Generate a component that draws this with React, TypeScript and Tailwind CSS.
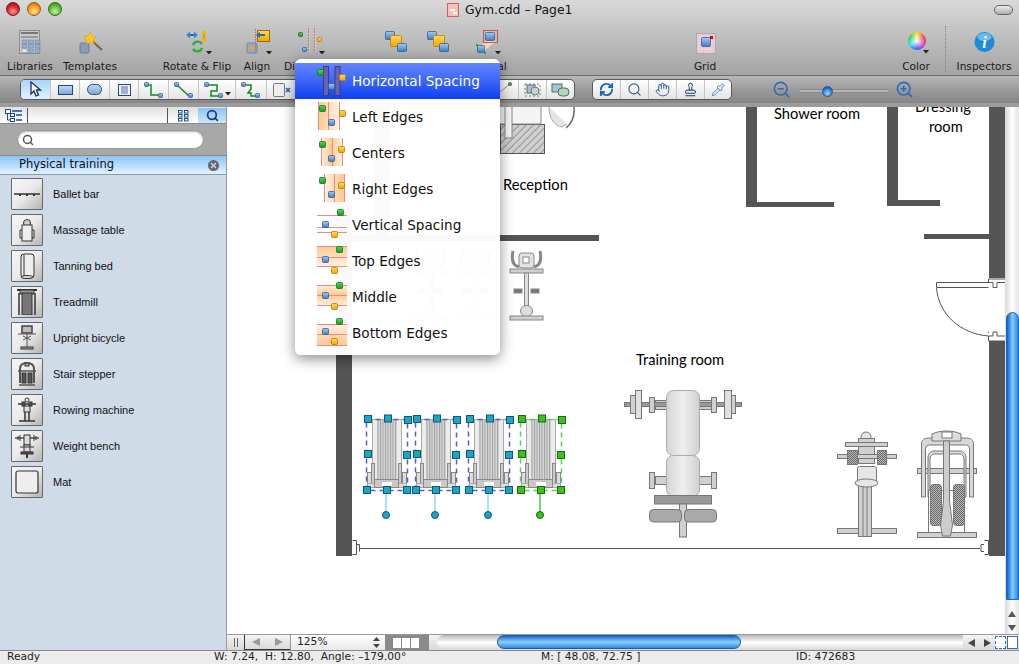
import { Hand, Pipette, RefreshCw, Search, Stamp, ZoomIn, ZoomOut } from "lucide-react";

const UI = "font-['DejaVu_Sans',sans-serif]";

function Sq({ x, y, w, h, c = "blue" }: { x: number; y: number; w: number; h: number; c?: string }) {
  const stroke = c === "blue" ? "#2c5f9e" : c === "green" ? "#0c7a1c" : "#b87a00";
  return <rect x={x + 0.5} y={y + 0.5} width={w - 1} height={h - 1} rx={1} fill={`url(#g-${c})`} stroke={stroke} strokeWidth={0.8} />;
}

function Defs() {
  return (
    <svg className="absolute w-0 h-0">
      <defs>
        <linearGradient id="g-blue" x1="0" y1="0" x2="0" y2="1"><stop offset="0" stopColor="#a9c8ee" /><stop offset="1" stopColor="#3f7cc4" /></linearGradient>
        <linearGradient id="g-orange" x1="0" y1="0" x2="0" y2="1"><stop offset="0" stopColor="#ffdc55" /><stop offset="1" stopColor="#f2a400" /></linearGradient>
        <linearGradient id="g-green" x1="0" y1="0" x2="0" y2="1"><stop offset="0" stopColor="#62d458" /><stop offset="1" stopColor="#0e9a22" /></linearGradient>
        <linearGradient id="g-pad" x1="0" y1="0" x2="1" y2="0"><stop offset="0" stopColor="#d4d4d4" /><stop offset=".5" stopColor="#efefef" /><stop offset="1" stopColor="#d0d0d0" /></linearGradient>
        <linearGradient id="g-peachl" x1="0" y1="0" x2="1" y2="0"><stop offset="0" stopColor="#ffc890" /><stop offset="1" stopColor="#fff0e0" /></linearGradient>
        <linearGradient id="g-peachr" x1="0" y1="0" x2="1" y2="0"><stop offset="0" stopColor="#fff0e0" /><stop offset="1" stopColor="#ffc890" /></linearGradient>
        <linearGradient id="g-peachc" x1="0" y1="0" x2="1" y2="0"><stop offset="0" stopColor="#fff0e0" /><stop offset=".5" stopColor="#ffc890" /><stop offset="1" stopColor="#fff0e0" /></linearGradient>
        <linearGradient id="g-peacht" x1="0" y1="0" x2="0" y2="1"><stop offset="0" stopColor="#ffc890" /><stop offset="1" stopColor="#fff0e0" /></linearGradient>
        <linearGradient id="g-peachm" x1="0" y1="0" x2="0" y2="1"><stop offset="0" stopColor="#fff0e0" /><stop offset=".5" stopColor="#ffc890" /><stop offset="1" stopColor="#fff0e0" /></linearGradient>
        <linearGradient id="g-peachb" x1="0" y1="0" x2="0" y2="1"><stop offset="0" stopColor="#fff0e0" /><stop offset="1" stopColor="#ffc890" /></linearGradient>
        <pattern id="hatch" width="5" height="5" patternUnits="userSpaceOnUse" patternTransform="rotate(45)"><rect width="5" height="5" fill="#cfcfcf" /><line x1="0" y1="0" x2="0" y2="5" stroke="#555" strokeWidth="1" /></pattern>
        <pattern id="check" width="2" height="2" patternUnits="userSpaceOnUse"><rect width="2" height="2" fill="#bbb" /><rect width="1" height="1" fill="#666" /><rect x="1" y="1" width="1" height="1" fill="#666" /></pattern>
        <pattern id="ribs" width="2.5" height="4" patternUnits="userSpaceOnUse"><rect width="2.5" height="4" fill="#d6d6d6" /><rect width="1" height="4" fill="#a2a2a2" /></pattern>
      </defs>
    </svg>
  );
}

function Caret() {
  return <path d="M0 0h6l-3 3.5z" fill="#222" />;
}

// top toolbar icons, all 40x28
function IconLibraries() {
  const cells = [];
  for (let r = 0; r < 3; r++) for (let c = 0; c < 3; c++) cells.push(<rect key={`${r}${c}`} x={12 + c * 6.5} y={14 + r * 4.5} width={5} height={3.5} fill={r === 2 && c === 0 ? "#eee" : "#8fb2d8"} stroke="#667" strokeWidth={0.4} />);
  return (
    <svg width="40" height="28">
      <rect x="9.500" y="4.500" width="20" height="23" fill="#c9c9c9" stroke="#8c8c8c" />
      <rect x="11" y="6" width="17" height="2" fill="#777" />
      <rect x="11" y="10" width="17" height="2" fill="#999" />
      {cells}
    </svg>
  );
}
function IconTemplates() {
  return (
    <svg width="40" height="28">
      <rect x="10" y="17" width="9" height="10" rx="1.500" fill="#8c9bb8" stroke="#6c7a95" />
      <path d="M20 13l12 11" stroke="#8a5a30" strokeWidth="2" />
      <path d="M20 6l2 4 4 1-3 3 1 4-4-2-4 2 1-4-3-3 4-1z" fill="#ffc820" stroke="#e89000" strokeWidth=".5" />
      <circle cx="15" cy="5" r="1" fill="#7fd0ff" /><circle cx="28" cy="7" r="1" fill="#7fd0ff" /><circle cx="29" cy="15" r="1" fill="#7fd0ff" />
    </svg>
  );
}
function IconRotate() {
  return (
    <svg width="40" height="28">
      <path d="M11 9h8" stroke="#2468b0" strokeWidth="2" />
      <path d="M9 9l4-3.500v7zM21 9l-4-3.500v7z" fill="#3a86d0" />
      <path d="M27 7v8" stroke="#e2a400" strokeWidth="2.500" />
      <path d="M27 4l-3 4h6zM27 17l-3-4h6z" fill="#f4b800" />
      <path d="M16 19a5 5 0 0 1 9-1M25 22a5 5 0 0 1-9 1" fill="none" stroke="#2fae3a" strokeWidth="2.400" />
      <g transform="translate(29 25)"><Caret /></g>
    </svg>
  );
}
function IconAlign() {
  return (
    <svg width="40" height="28">
      <rect x="10" y="17" width="10" height="10" rx="1.500" fill="#8faad2" stroke="#6b82a8" />
      <rect x="20.500" y="4.500" width="12" height="11" fill="url(#g-orange)" stroke="#a06800" />
      <path d="M18.500 3v24" stroke="#d06060" strokeDasharray="1.500 1" />
      <path d="M19 9l4-3v2h5v2h-5v2z" fill="#2a6ab0" />
      <path d="M18 22l-4-2.500v1.500h-3v2h3v1.500z" fill="#f4a800" />
      <g transform="translate(29 25)"><Caret /></g>
    </svg>
  );
}
function IconDistribute() {
  return (
    <svg width="40" height="28">
      <path d="M18.500 2v24M24.500 2v24" stroke="#c77" strokeDasharray="2 1" />
      <path d="M19.500 2v24M25.500 2v24" stroke="#ccb" />
      <Sq x={8} y={6} w={5} h={5} c="green" />
      <Sq x={12} y={21} w={5} h={5} />
      <Sq x={27} y={11} w={5} h={5} c="orange" />
      <g transform="translate(29 25)"><Caret /></g>
    </svg>
  );
}
function IconOrder({ d }: { d: number }) {
  return (
    <svg width="40" height="28">
      <Sq x={8 + d} y={5} w={10} h={9} />
      <Sq x={13 + d + d / 2} y={9} w={12} h={12} c="orange" />
      <Sq x={20 + d} y={17} w={10} h={9} />
    </svg>
  );
}
function IconIdentical() {
  return (
    <svg width="40" height="28">
      <path d="M13 24L26 10l6 5-14 12z" fill="#f6d6b8" />
      <rect x="19.500" y="4.500" width="14" height="12" fill="none" stroke="#d05050" />
      <Sq x={21} y={6} w={10} h={9} />
      <Sq x={13} y={19} w={8} h={8} />
      <rect x="12" y="18" width="2" height="2" fill="#2a2" /><rect x="20" y="26" width="2" height="2" fill="#2a2" />
      <g transform="translate(31 25)"><Caret /></g>
    </svg>
  );
}
function IconGrid() {
  return (
    <svg width="40" height="28">
      <rect x="11.500" y="7.500" width="19" height="20" fill="#e7c6d0" stroke="#aaa" />
      <path d="M14 8v19M17 8v19M20 8v19M23 8v19M26 8v19M12 11h18M12 14h18M12 17h18M12 20h18M12 23h18" stroke="#f4e2e8" strokeWidth=".6" />
      <Sq x={16} y={11} w={10} h={10} />
      <rect x="25" y="10" width="3" height="3" fill="#d00" />
    </svg>
  );
}
function IconColor() {
  return (
    <div className="relative w-[40px] h-[28px] flex justify-center pt-[6px] pl-[1px]">
      <div className="w-[18px] h-[18px] rounded-full bg-[radial-gradient(circle,#ffffff_0%,#ffffff00_72%),conic-gradient(#f4e020,#f02828,#d020c0,#2848f0,#20d0f0,#20d028,#f4e020)]" />
      <svg width="6" height="4" className="absolute left-[27px] top-[24px]"><Caret /></svg>
    </div>
  );
}
function IconInfo() {
  return (
    <svg width="42" height="28">
      <circle cx="21.500" cy="16" r="10" fill="#1e8ad8" />
      <ellipse cx="21.500" cy="11" rx="7" ry="4" fill="#8cd0f6" opacity=".7" />
      <text x="21.500" y="22" textAnchor="middle" fontFamily="'Liberation Serif',serif" fontStyle="italic" fontWeight="700" fontSize="16" fill="#fff">i</text>
    </svg>
  );
}

function TopItem({ w, ml = 0, label, children }: { w: number; ml?: number; label: string; children: React.ReactNode }) {
  return (
    <div className="flex flex-col items-center shrink-0" style={{ width: w, marginLeft: ml }}>
      <div className="h-[28px]">{children}</div>
      <span className="mt-[5px] text-[10.600px] leading-[14px] text-[#1a1a1a] whitespace-nowrap">{label}</span>
    </div>
  );
}

function Toolbar() {
  return (
    <div className={`h-[76px] shrink-0 border-b border-[#6e6e6e] bg-gradient-to-b from-[#d9d9d9] to-[#a4a4a4] ${UI}`}>
      <div className="h-[26px] flex items-start relative">
        <div className="flex gap-[7px] pl-[6px] pt-[2px]">
          <span className="w-[14px] h-[14px] rounded-full border border-[#7a1a1a] bg-[radial-gradient(circle_at_50%_70%,#ff9a8a,#d8202c_55%,#8a0a14)]" />
          <span className="w-[14px] h-[14px] rounded-full border border-[#9a5a10] bg-[radial-gradient(circle_at_50%_70%,#ffe08a,#f59a20_55%,#b85c00)]" />
          <span className="w-[14px] h-[14px] rounded-full border border-[#2a701a] bg-[radial-gradient(circle_at_50%_70%,#c4f0a0,#62b838_55%,#2a7a14)]" />
        </div>
        <div className="flex items-center ml-[385px] mt-[2px]">
          <svg width="13" height="14"><rect x=".5" y=".5" width="11" height="13" fill="#f4c0b8" stroke="#d06060" /><rect x="3" y="6" width="5" height="2" fill="#fff" /><rect x="6" y="9" width="4" height="2" fill="#fff" /></svg>
          <span className="ml-[5px] text-[12.400px] leading-[16px] text-[#111] whitespace-nowrap">Gym.cdd – Page1</span>
        </div>
        <span className="ml-auto mr-[6px] mt-[5px] w-[19px] h-[10px] rounded-full border border-[#666] bg-gradient-to-b from-[#eee] to-[#aaa]" />
      </div>
      <div className="flex">
        <TopItem w={60} label="Libraries"><IconLibraries /></TopItem>
        <TopItem w={60} label="Templates"><IconTemplates /></TopItem>
        <TopItem w={70} ml={42} label="Rotate & Flip"><IconRotate /></TopItem>
        <TopItem w={50} label="Align"><IconAlign /></TopItem>
        <TopItem w={56} label="Distribute"><IconDistribute /></TopItem>
        <TopItem w={40} ml={39} label=""><IconOrder d={0} /></TopItem>
        <TopItem w={40} label=""><IconOrder d={2} /></TopItem>
        <TopItem w={54} label="Identical"><IconIdentical /></TopItem>
        <TopItem w={50} ml={169} label="Grid"><IconGrid /></TopItem>
        <TopItem w={50} ml={161} label="Color"><IconColor /></TopItem>
        <div className="ml-[4px] w-0 h-[46px] border-l border-dotted border-[#808080]" />
        <TopItem w={60} ml={8} label="Inspectors"><IconInfo /></TopItem>
      </div>
    </div>
  );
}

function Cell({ w, on, children, last }: { w: number; on?: boolean; last?: boolean; children?: React.ReactNode }) {
  return (
    <div style={{ width: w }} className={`h-full shrink-0 flex items-center justify-center ${last ? "" : "border-r border-[#c4c4c4]"} ${on ? "bg-gradient-to-b from-[#a8d4fa] to-[#e0f2ff]" : ""}`}>
      {children}
    </div>
  );
}

function Conn({ kind }: { kind: number }) {
  const d = kind === 0 ? "M4 4h4v10h9" : kind === 1 ? "M4 4l12 11" : kind === 2 ? "M4 4h10v6H8v5h9" : "M6 4h5v4l-3 4h3v3h7";
  return (
    <svg width="22" height="18">
      <path d={d} fill="none" stroke="#0f8a22" strokeWidth="1.500" />
      <Sq x={1} y={1} w={5} h={5} />
      <Sq x={15} y={12} w={5} h={5} />
    </svg>
  );
}

function Toolbar2() {
  return (
    <div className="h-[31px] shrink-0 pt-[3px] bg-gradient-to-b from-[#b8b8b8] via-[#9a9a9a] to-[#868686] flex border-b-[4px] border-[#9c9c9c]">
      <div className="ml-[20px] w-[555px] h-[21px] rounded-[5px] border border-[#5a5a5a] bg-gradient-to-b from-white to-[#e4e4e4] flex overflow-hidden">
        <Cell w={30} on>
          <svg width="14" height="17"><path d="M2 1v12l3-3 2 5 2.500-1-2-5h4z" fill="#fff" stroke="#1a2a66" strokeWidth="1.300" /></svg>
        </Cell>
        <Cell w={29}><span className="w-[15px] h-[10px] border border-[#1a4a90] bg-gradient-to-b from-[#c4d8f0] to-[#7fa8d8]" /></Cell>
        <Cell w={30}><span className="w-[15px] h-[11px] rounded-full border border-[#1a4a90] bg-gradient-to-b from-[#c4d8f0] to-[#7fa8d8]" /></Cell>
        <Cell w={29}>
          <svg width="13" height="12"><rect x=".5" y=".5" width="12" height="11" fill="#f4f4fa" stroke="#1a4a90" /><path d="M3 3h7M3 5h7M3 7h7M3 9h7" stroke="#55689a" /></svg>
        </Cell>
        <Cell w={30}><Conn kind={0} /></Cell>
        <Cell w={30}><Conn kind={1} /></Cell>
        <Cell w={37}>
          <Conn kind={2} />
          <svg width="7" height="5" className="self-end mb-[2px]"><Caret /></svg>
        </Cell>
        <Cell w={31}><Conn kind={3} /></Cell>
        <Cell w={30}>
          <svg width="22" height="16"><rect x="2.500" y="1.500" width="11" height="13" rx="1" fill="#eee" stroke="#777" /><path d="M15 6l4 4m0-4l-4 4" stroke="#1a60c0" strokeWidth="1.500" /></svg>
        </Cell>
        <div className="flex-1 border-r border-[#c4c4c4] flex items-center justify-end pr-[4px]">
          <svg width="20" height="17"><path d="M2 14L16 3" stroke="#c77" /><Sq x={1} y={12} w={4} h={4} c="green" /><Sq x={14} y={1} w={4} h={4} c="green" /></svg>
        </div>
        <Cell w={28}>
          <svg width="22" height="17"><rect x="3" y="3" width="15" height="12" fill="none" stroke="#4a4" strokeDasharray="2 2" /><rect x="5" y="4" width="8" height="8" fill="#a8bcd4" stroke="#666" /><circle cx="13" cy="10" r="4" fill="#c4d0dc" stroke="#777" /></svg>
        </Cell>
        <Cell w={27} last>
          <svg width="22" height="17"><rect x="2" y="3" width="10" height="8" fill="#a8c0d8" stroke="#4a7a4a" /><rect x="8" y="7" width="11" height="8" rx="4" fill="#b4d4c0" stroke="#4a7a4a" /></svg>
        </Cell>
      </div>
      <div className="ml-[17px] w-[140px] h-[21px] rounded-[5px] border border-[#5a5a5a] bg-gradient-to-b from-white to-[#e4e4e4] flex overflow-hidden">
        <Cell w={28}><RefreshCw size={15} strokeWidth={3} className="text-[#1a66b8]" /></Cell>
        <Cell w={28}><Search size={15} strokeWidth={1.8} className="text-[#3a5a88]" /></Cell>
        <Cell w={28}><Hand size={15} strokeWidth={1.400} className="text-[#1a4a90]" /></Cell>
        <Cell w={28}><Stamp size={15} strokeWidth={1.600} className="text-[#1a3a70]" /></Cell>
        <Cell w={26} last><Pipette size={14} strokeWidth={1.500} className="text-[#4a78b8]" /></Cell>
      </div>
      <div className="ml-[40px] mt-[1px] flex items-start">
        <ZoomOut size={19} strokeWidth={2} className="text-[#2a6ab8]" />
        <div className="relative ml-[7px] mt-[9px] w-[92px] h-[4px] rounded-full bg-[#b4b4b4] border border-[#8a8a8a]">
          <span className="absolute left-[23px] -top-[4px] w-[11px] h-[11px] rounded-full bg-[radial-gradient(circle_at_50%_70%,#a8d8ff,#1a66c0_70%)] border border-[#2a5a9a]" />
        </div>
        <ZoomIn size={19} strokeWidth={2} className="text-[#2a6ab8] ml-[5px]" />
      </div>
    </div>
  );
}

function Gl({ children }: { children: React.ReactNode }) {
  return <svg width="26" height="26" viewBox="0 0 26 26" fill="none" stroke="#333" strokeWidth="1">{children}</svg>;
}

const shapes: { name: string; icon: React.ReactNode }[] = [
  { name: "Ballet bar", icon: <Gl><path d="M0 13h26" strokeWidth="1.500" /><path d="M6 13v2M13 13v2M20 13v2" strokeWidth="2" /></Gl> },
  { name: "Massage table", icon: <Gl><circle cx="13" cy="6" r="3.500" fill="#ccc" /><rect x="8" y="8" width="10" height="16" fill="#eee" /><path d="M8 13H6v8h2M18 13h2v8h-2" /></Gl> },
  { name: "Tanning bed", icon: <Gl><rect x="7" y="1" width="13" height="24" rx="3" fill="#eee" /><path d="M10 2v22" /><ellipse cx="13" cy="24" rx="6" ry="1.500" fill="#ddd" /></Gl> },
  { name: "Treadmill", icon: <Gl><path d="M3 1h20" strokeWidth="2" /><rect x="6" y="1" width="14" height="4" fill="#999" /><rect x="8" y="4" width="10" height="22" fill="#777" /><path d="M5 4v22M21 4v22" strokeWidth="1.500" /></Gl> },
  { name: "Upright bicycle", icon: <Gl><rect x="8" y="1" width="10" height="7" fill="#bbb" stroke="#444" strokeWidth="1.500" /><path d="M4 9h18M13 9v13M9 15l8-4M9 11l8 4" stroke="#555" /><rect x="7" y="22" width="12" height="2" fill="#aaa" /></Gl> },
  { name: "Stair stepper", icon: <Gl><path d="M6 22V8c0-4 3-6 7-6s7 2 7 6v14" strokeWidth="2" stroke="#555" /><rect x="11" y="2" width="4" height="3" fill="#aaa" /><rect x="8" y="12" width="4" height="10" fill="#555" /><rect x="14" y="12" width="4" height="10" fill="#555" /><path d="M4 10h18M5 24h16" stroke="#555" strokeWidth="1.500" /></Gl> },
  { name: "Rowing machine", icon: <Gl><circle cx="13" cy="3" r="2" /><path d="M4 7h18" strokeWidth="1.500" /><rect x="8" y="5" width="3" height="4" fill="#555" /><rect x="15" y="5" width="3" height="4" fill="#555" /><rect x="10" y="9" width="6" height="6" fill="#ddd" /><path d="M11 15v9M15 15v9M5 24h16" strokeWidth="1.500" /></Gl> },
  { name: "Weight bench", icon: <Gl><path d="M1 5h24" stroke="#555" strokeWidth="1.500" /><path d="M4 3v4M6 2v6M20 2v6M22 3v4" /><rect x="10" y="2" width="6" height="10" fill="#ddd" /><rect x="10" y="12" width="6" height="7" fill="#ddd" /><path d="M6 14h14" /><rect x="7" y="19" width="12" height="2" fill="#555" /><path d="M13 21v4" strokeWidth="2" /></Gl> },
  { name: "Mat", icon: <Gl><rect x="2" y="2" width="22" height="22" rx="2" fill="#eee" strokeWidth="1.200" /></Gl> },
];

function Sidebar() {
  return (
    <div className="w-[227px] shrink-0 flex flex-col bg-[#cfdbe7] border-r border-[#9a9a9a]">
      <div className="h-[17px] pt-px shrink-0 flex bg-gradient-to-b from-[#e0e0e0] to-white border-b border-[#8a8a8a]">
        <div className="w-[28px] flex items-center justify-center border-r border-[#555]">
          <svg width="17" height="13"><rect x=".5" y=".5" width="5" height="4" fill="#fff" stroke="#1a4a90" /><rect x="5.500" y="4.500" width="4" height="3" fill="#fff" stroke="#1a4a90" /><rect x="5.500" y="9.500" width="4" height="3" fill="#fff" stroke="#1a4a90" /><path d="M7 2h10M11 6h6M11 11h6" stroke="#1a4a90" strokeWidth="1.500" /><path d="M2.500 5v6h3" fill="none" stroke="#1a4a90" /></svg>
        </div>
        <div className="w-[141px] border-r border-[#555]" />
        <div className="w-[30px] flex items-center justify-center">
          <svg width="11" height="12" fill="#fff" stroke="#1a4a90"><rect x=".5" y=".5" width="3.500" height="2.500" /><rect x="6.500" y=".5" width="3.500" height="2.500" /><rect x=".5" y="4.500" width="3.500" height="2.500" /><rect x="6.500" y="4.500" width="3.500" height="2.500" /><rect x=".5" y="8.500" width="3.500" height="2.500" /><rect x="6.500" y="8.500" width="3.500" height="2.500" /></svg>
        </div>
        <div className="w-[28px] flex items-center justify-center bg-gradient-to-b from-[#8fc4f4] to-[#cce4fa]">
          <Search size={13} strokeWidth={3.200} className="text-[#1a3f88]" />
        </div>
      </div>
      <div className="h-[32px] shrink-0 pl-[17px] pt-[6px] bg-[#a8a8a8] border-b border-[#8a8a8a]">
        <div className="w-[187px] h-[19px] rounded-full bg-white border border-[#999] shadow-[inset_0_1px_2px_rgba(0,0,0,.3)] flex items-center pl-[4px]">
          <Search size={12} strokeWidth={3} className="text-[#555]" />
        </div>
      </div>
      <div className={`h-[19px] shrink-0 pl-[19px] flex items-center bg-gradient-to-b from-[#8cc4f8] to-[#e0f2ff] border-b border-[#8a9aa8] ${UI}`}>
        <span className="text-[11.500px] leading-[14px] -mt-[2px] text-[#111]">Physical training</span>
        <span className="ml-auto mr-[7px] w-[11px] h-[11px] rounded-full bg-[#666] text-[#ddd] flex items-center justify-center">
          <svg width="7" height="7"><path d="M1 1l5 5m0-5l-5 5" stroke="currentColor" strokeWidth="1.200" /></svg>
        </span>
      </div>
      <div className="flex flex-col gap-[4px] pt-[3px] pl-[11px] font-['Liberation_Sans',sans-serif]">
        {shapes.map(s => (
          <div key={s.name} className="flex items-center h-[32px]">
            <div className="w-[32px] h-[32px] shrink-0 rounded-[1px] border-[1.500px] border-[#686868] bg-gradient-to-br from-[#f6f6f6] via-[#eaeaea] to-[#b4b4b4] flex items-center justify-center">
              {s.icon}
            </div>
            <span className="ml-[10px] text-[11px] text-[#111]">{s.name}</span>
          </div>
        ))}
      </div>
    </div>
  );
}

function Bike({ x }: { x: number }) {
  return (
    <g transform={`translate(${x} 250)`} stroke="#888" fill="#d0d0d0">
      <path d="M3 1c-2 10 1 15 6 16M30 1c2 10-1 15-6 16" fill="none" stroke="#888" strokeWidth="3" />
      <rect x="9" y="3" width="15" height="15" rx="3" fill="#e2e2e2" />
      <rect x="13" y="7" width="6" height="6" fill="#fff" />
      <rect x="0" y="19" width="33" height="4" />
      <rect x="14.500" y="23" width="4" height="37" fill="#ddd" />
      <rect x="4" y="39" width="8" height="4" fill="#777" />
      <rect x="21" y="39" width="8" height="4" fill="#777" />
      <ellipse cx="16.500" cy="61" rx="6" ry="5.500" fill="#ddd" />
      <rect x="0" y="66" width="33" height="4" />
    </g>
  );
}

function Treadmill({ dx, green }: { dx: number; green?: boolean }) {
  const f = green ? "#3cc01e" : "#20a4c4";
  const s = green ? "#1a6a10" : "#0c5878";
  const hs: [number, number][] = [[368, 419], [388, 418.500], [408, 420], [368, 454], [407, 455], [367, 490], [387, 490], [407, 490]];
  return (
    <g transform={`translate(${dx} 0)`}>
      <rect x="372.500" y="419.500" width="29" height="61" fill="#ececec" stroke="#aaa" />
      <rect x="377" y="420" width="20" height="60" fill="url(#ribs)" />
      <rect x="367.500" y="472.500" width="4" height="14" fill="#ddd" stroke="#888" />
      <rect x="402.500" y="472.500" width="4" height="14" fill="#ddd" stroke="#888" />
      <rect x="371.500" y="463.500" width="3" height="20" fill="#ccc" stroke="#888" />
      <rect x="398.500" y="463.500" width="3" height="20" fill="#ccc" stroke="#888" />
      <rect x="367.500" y="483.500" width="39" height="4" fill="#ddd" stroke="#aaa" />
      <rect x="374.500" y="479.500" width="24" height="8" fill="#c8c8c8" stroke="#888" />
      <rect x="382" y="482" width="10" height="4" fill="#fff" />
      <rect x="366.500" y="419.500" width="41" height="71" fill="none" stroke={green ? "#52d452" : "#5a5ad0"} strokeWidth="1.500" strokeDasharray="5 4" />
      <path d="M386 491v24" stroke={green ? "#46c846" : "#9ad0f8"} strokeWidth="1.500" />
      {hs.map(([x, y], i) => <rect key={i} x={x - 3.500} y={y - 3.500} width="7" height="7" fill={f} stroke={s} />)}
      <circle cx="386" cy="515" r="3.500" fill={f} stroke={s} />
    </g>
  );
}

function Plan() {
  const wall = "#555";
  return (
    <svg className="absolute left-0 top-0" width="778" height="527" viewBox="227 107 778 527">
      {/* walls */}
      <g fill={wall}>
        <rect x="336" y="200" width="16" height="356" />
        <rect x="375" y="107" width="15" height="133" fill="#666" />
        <rect x="352" y="235" width="247" height="6" />
        <rect x="746" y="107" width="11" height="100" />
        <rect x="746" y="202" width="88" height="5" />
        <rect x="887" y="107" width="11" height="99" />
        <rect x="887" y="200" width="53" height="6" />
        <rect x="924" y="234" width="65" height="5" />
        <rect x="989" y="107" width="16" height="171" />
        <rect x="989" y="341" width="16" height="215" />
      </g>
      {/* door */}
      <g fill="#fff" stroke="#555">
        <path d="M988.500 279v3.500M988.500 333v-1M1005 279h-16.500" fill="none" />
        <path d="M936.500 282.500h56.500v5h4v-5h8M936.500 282.500v5h52" fill="none" />
        <path d="M936.500 288c2 26 24 46 52 48h4.500v-4h4v4h8M988.500 336v5h16.500" fill="none" />
      </g>
      {/* reception */}
      <rect x="500.500" y="124.500" width="44" height="29" fill="url(#hatch)" stroke="#555" />
      <rect x="480" y="100" width="61" height="24" fill="#f4f4f4" stroke="#888" />
      <rect x="505" y="100" width="7" height="38" fill="#f4f4f4" stroke="#888" />
      <path d="M549 107c0 12 6 19 13 20l5-3" fill="#e4e4e4" stroke="#aaa" />
      <path d="M574 107c1 10-2 16-8 21" fill="none" stroke="#666" strokeWidth="1.500" />
      <Bike x={510} />
      <Bike x={414} />
      <Bike x={459} />
      {/* bottom dimension line */}
      <path d="M352.500 540.500h4v14h-4M356.500 544.500h3v7M360 548.500h620M984.500 540.500h4v14h-4M984 544.500h-3v7h3" fill="#fff" stroke="#555" />
      {[0, 49, 102].map(d => <Treadmill key={d} dx={d} />)}
      <Treadmill dx={154} green />
      {/* weight bench */}
      <g stroke="#777" fill="#d0d0d0">
        <rect x="655.500" y="400.500" width="56" height="9" />
        <rect x="624.500" y="402.500" width="117" height="4" fill="#999" />
        <rect x="630.500" y="395.500" width="5" height="18" /><rect x="635.500" y="390.500" width="6" height="28" fill="#e0e0e0" />
        <rect x="731.500" y="395.500" width="4" height="18" /><rect x="724.500" y="390.500" width="7" height="28" fill="#e0e0e0" />
        <rect x="649.500" y="397.500" width="5" height="15" /><rect x="711.500" y="397.500" width="5" height="15" />
        <rect x="655.500" y="476.500" width="56" height="8" /><rect x="649.500" y="472.500" width="5" height="16" /><rect x="711.500" y="472.500" width="5" height="16" />
        <rect x="666.500" y="390.500" width="33" height="65" rx="7" fill="url(#g-pad)" stroke="#aaa" />
        <rect x="666.500" y="455.500" width="33" height="41" rx="7" fill="url(#g-pad)" stroke="#aaa" />
        <rect x="654.500" y="495.500" width="57" height="8.500" fill="#999" />
        <rect x="679.500" y="504" width="7" height="33" />
        <rect x="649.500" y="509.500" width="32" height="12.500" rx="4" fill="#aaa" />
        <rect x="684.500" y="509.500" width="32" height="12.500" rx="4" fill="#aaa" />
      </g>
      {/* rowing machine */}
      <g stroke="#777" fill="#d0d0d0">
        <circle cx="866" cy="437" r="5" fill="#e4e4e4" />
        <rect x="837.500" y="528.500" width="59" height="5" />
        <rect x="858.500" y="480.500" width="13" height="56" /><path d="M863 481v56M867 481v56" />
        <rect x="858.500" y="438.500" width="16" height="5" />
        <rect x="845.500" y="442.500" width="42" height="4" />
        <rect x="858.500" y="446.500" width="16" height="17" />
        <rect x="837.500" y="454.500" width="59" height="4" />
        <rect x="847.500" y="450.500" width="10" height="14" fill="url(#check)" />
        <rect x="877.500" y="450.500" width="9" height="14" fill="url(#check)" />
        <rect x="857.500" y="466.500" width="19" height="16" rx="2" fill="#e6e6e6" />
        <ellipse cx="866.500" cy="483" rx="11.500" ry="4" fill="#e6e6e6" />
      </g>
      {/* stair stepper */}
      <g stroke="#777" fill="#d0d0d0">
        <rect x="917.500" y="532.500" width="59" height="5" />
        <rect x="917.500" y="468.500" width="59" height="5" />
        <path d="M921.500 497V444c0-4 3-6 7-6h38c4 0 7 2 7 6v53h-4v-48c0-3-2-4-4-4h-36c-2 0-4 1-4 4v48z" fill="#d8d8d8" />
        <path d="M928 497v-40c0-3 3-6 6-6h26c3 0 6 3 6 6v40h-2v-38c0-3-2-5-4-5h-26c-2 0-4 2-4 5v38z" fill="#ddd" />
        <rect x="928.500" y="490.500" width="36" height="42" fill="#fff" />
        <rect x="930.500" y="484.500" width="11" height="41" rx="3" fill="url(#check)" />
        <rect x="953.500" y="484.500" width="11" height="41" rx="3" fill="url(#check)" />
        <path d="M932 441v-7c8-4 21-4 29 0v7z" fill="#ddd" />
        <rect x="942" y="432" width="10" height="6" fill="#fff" />
        <path d="M943.500 441h6v60l3 24-2 11h-8l-2-11 3-24z" fill="#ccc" />
      </g>
    </svg>
  );
}

function Label({ x, y, children }: { x: number; y: number; children: React.ReactNode }) {
  return <span style={{ left: x, top: y }} className="absolute text-[14.700px] leading-[14px] text-black whitespace-nowrap font-['Lato',sans-serif]">{children}</span>;
}

function VScroll() {
  return (
    <div className="w-[14px] shrink-0 flex flex-col bg-gradient-to-r from-[#d8d8d8] via-white to-[#e4e4e4]">
      <div className="mt-[12px] h-[193px]" />
      <div className="w-[13px] h-[288px] ml-px rounded-t-[7px] bg-gradient-to-r from-[#0a5cc4] via-[#82ccff] to-[#2a86e4] border border-[#1a66c0]" />
      <div className="flex-1 flex flex-col items-center justify-end pb-[3px] gap-[8px] text-[#444]">
        <svg width="8" height="6"><path d="M0 6h8L4 0z" fill="#555" /></svg>
        <svg width="8" height="6"><path d="M0 0h8L4 6z" fill="#555" /></svg>
      </div>
    </div>
  );
}

function HScroll() {
  return (
    <div className={`h-[16px] shrink-0 flex border-t border-[#9a9a9a] bg-gradient-to-b from-[#f4f4f4] to-[#d8d8d8] ${UI}`}>
      <div className="w-[18px] flex items-center justify-center gap-[1px] border-r border-[#333]">
        <span className="w-px h-[9px] bg-[#666]" /><span className="w-px h-[9px] bg-[#666] ml-[1px]" />
      </div>
      <div className="w-[45px] flex items-center justify-around border-b border-[#333]">
        <svg width="8" height="8"><path d="M8 0v8L0 4z" fill="#999" /></svg>
        <svg width="8" height="8"><path d="M0 0v8l8-4z" fill="#999" /></svg>
      </div>
      <div className="w-[95px] relative flex items-center pl-[6px] bg-gradient-to-b from-white to-[#e8e8e8] border-l border-[#999]">
        <span className="text-[10.700px] leading-none text-[#222]">125%</span>
        <svg width="7" height="13" className="absolute right-[5px]"><path d="M0 5h7L3.500 1zM0 8h7l-3.500 4z" fill="#444" /></svg>
      </div>
      <div className="w-[44px] flex items-center gap-[1px] pl-[8px] bg-[#8a8a8a]">
        <span className="w-[8px] h-[10px] bg-white" /><span className="w-[8px] h-[10px] bg-white" /><span className="w-[8px] h-[10px] bg-white" />
      </div>
      <div className="flex-1 ml-[8px] pl-[60px] rounded-l-full bg-gradient-to-b from-[#b8b8b8] via-white to-[#d8d8d8]">
        <div className="w-[244px] h-[14px] rounded-full border border-[#1a5ab4] bg-gradient-to-b from-[#1464cc] via-[#8cd0ff] to-[#2a8ae8]" />
      </div>
      <div className="w-[32px] flex items-center justify-around">
        <svg width="7" height="8"><path d="M7 0v8L0 4z" fill="#444" /></svg>
        <svg width="7" height="8"><path d="M0 0v8l7-4z" fill="#444" /></svg>
      </div>
      <div className="w-[24px] flex items-center gap-[1px]">
        <span className="w-[11px] h-[13px] border border-dashed border-[#3a6ab0] bg-white" />
        <span className="w-[11px] h-[13px] border border-[#3a6ab0] bg-white" />
      </div>
    </div>
  );
}

const R = "#ea8a8a";
type MenuRow = { label: string; lines: number[]; h?: boolean; peach?: string; g: [number, number]; y: [number, number]; b: [number, number] };
const rows: MenuRow[] = [
  { label: "Horizontal Spacing", lines: [], g: [4, 9], y: [26, 14], b: [15, 23] },
  { label: "Left Edges", lines: [2, 12, 23], peach: "l", g: [6, 9], y: [26, 14], b: [15, 23] },
  { label: "Centers", lines: [5, 16, 26], peach: "c", g: [6, 9], y: [25, 14], b: [15, 23] },
  { label: "Right Edges", lines: [8, 18, 28], peach: "r", g: [6, 9], y: [25, 14], b: [15, 23] },
  { label: "Vertical Spacing", h: true, lines: [8, 20, 25], g: [24, 5], y: [18, 27], b: [9, 17] },
  { label: "Top Edges", h: true, lines: [3, 14, 23], peach: "t", g: [23, 6], y: [18, 27], b: [9, 16] },
  { label: "Middle", h: true, lines: [6, 16, 26], peach: "m", g: [23, 6], y: [18, 27], b: [9, 16] },
  { label: "Bottom Edges", h: true, lines: [9, 19, 30], peach: "b", g: [23, 6], y: [18, 26], b: [9, 16] },
];

function MenuIcon({ r }: { r: MenuRow }) {
  const [a, , c] = r.lines;
  return (
    <svg width="34" height="36" className="shrink-0">
      {r.lines.length === 0 && <g fill="#6a62b0" stroke="#3a3a88"><rect x="7.500" y="3.500" width="5" height="29" /><rect x="19" y="3.500" width="5" height="29" /></g>}
      {r.peach && (r.h
        ? <rect x="1" y={a} width="30" height={c - a} fill={`url(#g-peach${r.peach})`} />
        : <rect x={a} y="3" width={c - a} height="28" fill={`url(#g-peach${r.peach})`} />)}
      {r.lines.map(v => r.h
        ? <path key={v} d={`M1 ${v + 0.5}h30`} stroke={R} />
        : <path key={v} d={`M${v + 0.5} 3v28`} stroke={R} />)}
      <Sq x={r.g[0] - 3} y={r.g[1] - 3} w={7} h={7} c="green" />
      <Sq x={r.y[0] - 3} y={r.y[1] - 3} w={7} h={7} c="orange" />
      <Sq x={r.b[0] - 3} y={r.b[1] - 3} w={7} h={7} />
    </svg>
  );
}

function Menu() {
  return (
    <div className={`absolute left-[295px] top-[59px] w-[205px] h-[296px] py-[4px] rounded-[6px] bg-white/[.97] shadow-[0_4px_14px_rgba(0,0,0,.45)] ${UI}`}>
      {rows.map((r, i) => (
        <div key={r.label} className={`h-[36px] flex items-center pl-[21px] ${i === 0 ? "bg-gradient-to-b from-[#6484ff] to-[#0c3ef0] text-white" : "text-[#111]"}`}>
          <MenuIcon r={r} />
          <span className="ml-[2px] mt-[2px] text-[13.600px] leading-none whitespace-nowrap">{r.label}</span>
        </div>
      ))}
    </div>
  );
}

function StatusBar() {
  return (
    <div className={`h-[14px] shrink-0 flex items-center border-t border-[#8a8a8a] bg-[#ececec] text-[10.700px] leading-none text-[#222] whitespace-pre ${UI}`}>
      <span className="ml-[7px] w-[207px]">Ready</span>
      <span className="w-[327px]">W: 7.24,  H: 12.80,  Angle: –179.00°</span>
      <span className="w-[255px]">M: [ 48.08, 72.75 ]</span>
      <span>ID: 472683</span>
    </div>
  );
}

export default function App() {
  return (
    <div className="relative w-[1019px] h-[664px] overflow-hidden flex flex-col bg-white">
      <Defs />
      <Toolbar />
      <Toolbar2 />
      <div className="flex-1 min-h-0 flex">
        <Sidebar />
        <div className="flex-1 flex flex-col min-w-0">
          <div className="flex-1 min-h-0 flex">
            <div className="relative flex-1 overflow-hidden bg-white">
              <Plan />
              <Label x={276} y={70}>Reception</Label>
              <Label x={547} y={-1}>Shower room</Label>
              <Label x={688} y={-8}>Dressing</Label>
              <Label x={702} y={12}>room</Label>
              <Label x={409} y={245}>Training room</Label>
            </div>
            <VScroll />
          </div>
          <HScroll />
        </div>
      </div>
      <StatusBar />
      <Menu />
    </div>
  );
}
